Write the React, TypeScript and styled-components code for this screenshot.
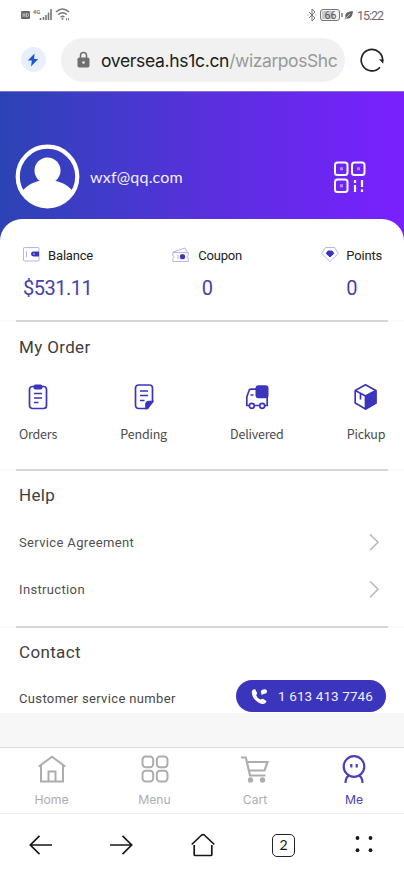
import React from 'react';
import styled, { createGlobalStyle } from 'styled-components';

const BLUE = '#3b35bd';

const Global = createGlobalStyle`
  * { box-sizing: border-box; }
  body { margin: 0; background: #fff; font-family: Roboto, "Noto Sans", sans-serif; }
  svg { display: block; flex: none; overflow: visible; }
`;

const Screen = styled.div`
  width: 404px;
  height: 876px;
  overflow: hidden;
  display: flex;
  flex-direction: column;
  background: #fff;
`;

const StatusBar = styled.div`
  height: 30px;
  padding: 0 21px 0 20px;
  display: flex;
  align-items: center;
  justify-content: space-between;
  color: #6b6b6b;
`;
const StatusGroup = styled.div`
  display: flex;
  align-items: center;
`;
const Clock = styled.span`
  font-size: 12.5px;
  letter-spacing: -1.05px;
  margin-left: 4px;
  width: 26px;
  white-space: nowrap;
`;

const AddressBar = styled.div`
  height: 61px;
  padding: 0 20px 2px 21px;
  display: flex;
  align-items: center;
`;
const Bolt = styled.div`
  width: 25px;
  height: 25px;
  border-radius: 50%;
  background: #e8eefb;
  display: grid;
  place-items: center;
  margin-right: 15px;
`;
const UrlPill = styled.div`
  width: 285px;
  height: 44px;
  border-radius: 22px;
  background: #f1f1f1;
  display: flex;
  align-items: center;
  padding-left: 16px;
  margin-right: 15px;
`;
const UrlText = styled.div`
  margin: 2px 0 0 11px;
  white-space: nowrap;
  font: 17.5px/26px Inter, sans-serif;
  letter-spacing: -0.32px;
  color: #202020;
`;
const UrlPath = styled.span`
  color: #999;
  letter-spacing: -0.42px;
`;

const Hero = styled.header`
  height: 153px;
  flex: none;
  padding: 52px 38px 0 15px;
  background: linear-gradient(90deg, #2c43b4 0%, #433acb 28%, #5830dc 50%, #7a20ff 100%);
  border-top: 1px solid #8173cf;
  display: flex;
  align-items: flex-start;
`;
const UserName = styled.div`
  flex: 1;
  margin: 21px 0 0 10px;
  color: #f1efff;
  font: 16px/24px Lato, sans-serif;
  letter-spacing: 0.2px;
`;
const QrSlot = styled.div`
  margin: 17px 0 0;
`;

const Card = styled.main`
  flex: none;
  height: 494px;
  margin-top: -25px;
  border-radius: 22px 22px 0 0;
  background: #fff;
`;
const Stats = styled.section`
  height: 101px;
  padding: 26px 22px 0 23px;
  display: flex;
  justify-content: space-between;
`;
const Stat = styled.div<{ $center?: boolean; $w: number }>`
  width: ${(p) => p.$w}px;
  text-align: ${(p) => (p.$center ? 'center' : 'left')};
`;
const StatLabel = styled.div`
  display: flex;
  align-items: center;
  justify-content: space-between;
  font-size: 13px;
  line-height: 21px;
  letter-spacing: -0.2px;
  color: #222;
`;
const StatValue = styled.div`
  margin-top: 9px;
  color: #4541ad;
  font-size: 20px;
  line-height: 26px;
  letter-spacing: -0.5px;
  white-space: nowrap;
`;
const Divider = styled.hr`
  height: 2px;
  margin: 0;
  border: 0;
  background: linear-gradient(90deg, #fafafa 16px, #d6d6d6 16px, #d6d6d6 388px, #fafafa 388px);
`;
const Section = styled.section<{ $h: number; $top?: number }>`
  height: ${(p) => p.$h}px;
  padding: ${(p) => p.$top ?? 13}px 19px 0;
`;
const Heading = styled.h2`
  margin: 0;
  font: 400 17px/22px Roboto, sans-serif;
  letter-spacing: 0.35px;
  color: #404040;
`;
const OrderRow = styled.div`
  display: flex;
  justify-content: space-between;
  padding-top: 26px;
`;
const OrderItem = styled.div<{ $w: number }>`
  width: ${(p) => p.$w}px;
  display: flex;
  flex-direction: column;
  align-items: center;
  gap: 15px;
  font: 12.5px/18px "Noto Sans CJK SC", sans-serif;
  letter-spacing: -0.2px;
  color: #4b4b4b;
`;
const LinkRow = styled.div<{ $first?: boolean }>`
  height: 47px;
  margin-top: ${(p) => (p.$first ? '13px' : 0)};
  padding-right: 6px;
  display: flex;
  align-items: center;
  justify-content: space-between;
  font-size: 13px;
  letter-spacing: 0.35px;
  color: #505050;
`;
const ContactRow = styled.div`
  height: 32px;
  margin: 17px -1px 0 0;
  display: flex;
  align-items: center;
  justify-content: space-between;
  font-size: 13px;
  letter-spacing: 0.35px;
  color: #484848;
`;
const ContactLabel = styled.span`
  padding-top: 4px;
`;
const PhoneButton = styled.button`
  width: 150px;
  height: 32px;
  padding: 0 13px 0 15px;
  border: 0;
  border-radius: 16px;
  background: ${BLUE};
  color: #f0efff;
  display: flex;
  align-items: center;
  justify-content: space-between;
  font: 13.5px Roboto, sans-serif;
  letter-spacing: 0.1px;
  white-space: nowrap;
`;
const Gap = styled.div`
  height: 34px;
  background: #f7f7f7;
`;
const TabBar = styled.nav`
  height: 66px;
  border-top: 1px solid #dedede;
  padding: 7px 0 0;
  display: grid;
  grid-template-columns: 103px 103px 98px 100px;
`;
const Tab = styled.div<{ $active?: boolean }>`
  display: flex;
  flex-direction: column;
  align-items: center;
  gap: 8px;
  color: ${(p) => (p.$active ? '#4b40b8' : '#adadad')};
  font: 12.2px/18px Inter, sans-serif;
`;
const BrowserNav = styled.nav`
  height: 63px;
  border-top: 1px solid #efefef;
  display: grid;
  grid-template-columns: repeat(5, 81px);
  margin-right: -1px;
  align-items: center;
  justify-items: center;
  color: #171717;
`;
const TabCount = styled.div`
  width: 23px;
  height: 23px;
  border: 1.7px solid #222;
  border-radius: 5px;
  display: grid;
  place-items: center;
  font: 14px/18px Lato, sans-serif;
`;

const SignalIcons = () => (
  <svg width="51" height="14" viewBox="0 0 51 14" fill="none" stroke="#777">
    <rect x="1" y="3" width="9" height="8" rx="1.2" fill="#666" stroke="none" />
    <path d="M3 5v4M5 5v4M3 7h2M6.500 5.300h1c1.400 0 1.400 3.400 0 3.400h-1z" stroke="#ddd" strokeWidth=".7" />
    <text x="12.800" y="5.500" fontSize="6" fontFamily="Roboto" fontWeight="700" fill="#777" stroke="none">4G</text>
    <path d="M20.500 10v2M23.500 9v3M26 7v5M28.500 4.500v7.500M31 1v11" strokeWidth="1.600" />
    <path d="M36 4q6.500-6 13 0M38.200 6.500q4.300-3.500 8.600 0M40.500 9q2-1.500 4 0" strokeWidth="1.400" />
    <circle cx="42.500" cy="10.800" r="1" fill="#777" stroke="none" />
    <path d="M46.500 10v2.500M48.500 10v2.500" strokeWidth=".9" />
  </svg>
);
const BatteryIcons = () => (
  <svg width="47" height="14" viewBox="0 0 47 14" fill="none" stroke="#777">
    <path d="m3 4 6 6-3 3V1l3 3-6 6M1.500 7h.8M9.500 7h.8" />
    <rect x="14.500" y="1.500" width="19" height="11" rx="2.500" fill="#f4f4f4" />
    <rect x="16" y="3" width="12" height="8" rx="1" fill="#c9c9c9" stroke="none" />
    <text x="18.500" y="10.800" fontSize="10.500" fontFamily="Roboto" fill="#555" stroke="none">66</text>
    <path d="M36 5v4" strokeWidth="1.500" />
    <path d="M47 3c-6 .5-8.500 2.500-7.500 6l-1 2.500 2-1c3.500.5 6-1.500 6.500-7.500Z" fill="#666" stroke="none" />
    <path d="m39.500 10.500 4.500-4.500" stroke="#fff" strokeWidth=".6" />
  </svg>
);
const BoltIcon = () => (
  <svg width="12" height="14" viewBox="0 0 12 14"><path d="M7.500.5.800 7.500h4L4 13.500l7.200-7.500H7.100Z" fill="#1858d6" /></svg>
);
const LockIcon = () => (
  <svg width="13" height="16" viewBox="0 0 13 16">
    <path d="M3.500 7V3.500a3 3 0 0 1 6 0V7" fill="none" stroke="#707070" strokeWidth="1.500" />
    <rect x=".5" y="5.500" width="12" height="10" rx="1.800" fill="#707070" />
    <circle cx="6.500" cy="10.500" r="1.300" fill="#eee" />
  </svg>
);
const ReloadIcon = () => (
  <svg width="24" height="24" viewBox="0 0 24 24" fill="none">
    <path d="M20 19.200a10.700 10.700 0 1 1 2.600-6" stroke="#222" strokeWidth="1.700" />
    <path d="m19 11.200 4.500.3-.3 4.300Z" fill="#222" />
  </svg>
);
const Avatar = () => (
  <svg width="65" height="65" viewBox="0 0 65 65">
    <circle cx="32.500" cy="32.500" r="29.800" fill="none" stroke="#fff" strokeWidth="4.200" />
    <circle cx="32.500" cy="26.500" r="13" fill="#fff" />
    <path d="M7 47.500C11 42 18 38 25.500 36.800h14C47 38 54 42 58 47.500 54 57 44 63 32.500 63S11 57 7 47.500Z" fill="#fff" />
  </svg>
);
const QrIcon = () => (
  <svg width="32" height="33" viewBox="0 0 32 33" fill="none" stroke="#fff" strokeWidth="2">
    <rect x="1" y="1.500" width="12.500" height="12.500" rx="2.500" />
    <rect x="18" y="1.500" width="12.500" height="12.500" rx="2.500" />
    <rect x="1" y="18.500" width="12.500" height="12.500" rx="2.500" />
    <path d="M6 7.700h3M23 7.700h3M6 24.700h3" stroke="#b48aff" strokeWidth="3" />
    <path d="M21 19v3M21 24v7M28 19v7M28 28.500v2.500" strokeWidth="2.200" />
  </svg>
);
const WalletIcon = () => (
  <svg width="17" height="17" viewBox="0 0 17 17" fill="none" stroke="#b9b5df">
    <rect x=".5" y=".5" width="15.500" height="13.500" rx="1" />
    <path d="M3.500 4v6" />
    <path d="M10.500 4.500H16v5h-5.500a2.500 2.500 0 0 1 0-5Z" fill={BLUE} stroke="none" />
    <circle cx="11" cy="7" r=".7" fill="#fff" stroke="none" />
  </svg>
);
const CouponIcon = () => (
  <svg width="17" height="17" viewBox="0 0 17 17" fill="none" stroke="#b9b5df">
    <path d="m1 5 12-4 2 4M.8 5.500h15.400v3c-1.500.5-1.500 2 0 2.500v3.500H.8V11c1.500-.5 1.500-2 0-2.500Z" />
    <path d="M6 8v4" />
    <circle cx="10.500" cy="9.700" r="2.600" fill={BLUE} stroke="none" />
  </svg>
);
const PointsIcon = () => (
  <svg width="18" height="17" viewBox="0 0 18 17" fill="none" stroke="#b9b5df">
    <path d="M4.500.5h9l3.800 6L9 14.500.700 6.500Z" strokeLinejoin="round" />
    <path d="M7 4h4l1.800 2.500L9 10 5.200 6.500Z" fill={BLUE} stroke={BLUE} strokeLinejoin="round" />
  </svg>
);
const OrdersIcon = () => (
  <svg width="20" height="26" viewBox="0 0 20 26" fill="none" stroke={BLUE} strokeWidth="1.700">
    <rect x="1.500" y="2.500" width="17" height="22" rx="3" />
    <rect x="5.500" y=".5" width="9" height="5" rx="2" fill={BLUE} stroke="none" />
    <path d="M6 9.500h8M6 14h8M6 18.500h4.500" />
  </svg>
);
const PendingIcon = () => (
  <svg width="20" height="26" viewBox="0 0 20 26" fill="none" stroke={BLUE} strokeWidth="1.700">
    <path d="M12 24.500H4.500a3 3 0 0 1-3-3V4a3 3 0 0 1 3-3h11a3 3 0 0 1 3 3v14L12 24.500Z" />
    <path d="M18.500 17.500H15a3 3 0 0 0-3 3v4h1.500Z" fill={BLUE} />
    <path d="M6 7h8M6 11.500h8M6 16.500h4.500" />
  </svg>
);
const TruckIcon = () => (
  <svg width="24" height="26" viewBox="0 0 24 26" fill="none" stroke={BLUE} strokeWidth="1.700">
    <path d="M4 21.500H1.800V13L4 6.700a2 2 0 0 1 2-1.500h6M9.500 21.500h5M20 21.500h2.200v-10" />
    <rect x="10.500" y="1.200" width="13" height="13" rx="3" fill={BLUE} stroke="none" />
    <path d="M5.500 11h3" strokeWidth="1.500" />
    <circle cx="6.800" cy="21.800" r="2.500" fill="#fff" />
    <circle cx="17.200" cy="21.800" r="2.500" fill="#fff" />
  </svg>
);
const BoxIcon = () => (
  <svg width="23" height="26" viewBox="0 0 23 26" fill="none" stroke={BLUE} strokeWidth="1.700" strokeLinejoin="round">
    <path d="M11.500.8 21.800 6.500v12.500l-10.300 6L1.200 19V6.500Z" />
    <path d="M21.800 6.500 11.500 12v13l10.300-6Z" fill={BLUE} />
    <path d="m1.200 6.500 10.300 5.500M6.500 10v5.500" />
  </svg>
);
const Chevron = () => (
  <svg width="10" height="18" viewBox="0 0 10 18" fill="none"><path d="m1 .3 8 8-8 8" stroke="#b9b9b9" strokeWidth="1.600" /></svg>
);
const PhoneIcon = () => (
  <svg width="17" height="17" viewBox="0 0 17 17" fill="#fff">
    <path d="M.8 3.500C1.200 1.800 3 1 4.200 1.300L6.200 5.200 5.200 7.300c.7 2 2.100 3.200 4.300 4.300l2.300-.8L15.500 13c-.2 1.900-2 3-4 3C6.500 15.500.3 9.500.8 3.500Z" />
    <path d="M9.800 4C9.800 1.800 12 1.200 13.500 1.200S16 2 16 3.500 14.500 6 12.500 6L10.500 7.200V5.600C10 5.200 9.800 4.700 9.800 4Z" />
  </svg>
);
const HomeIcon = () => (
  <svg width="28" height="28" viewBox="0 0 28 28" fill="none" stroke="currentColor" strokeWidth="2">
    <path d="M.8 11.500 14 1.800l13.200 9.700M3 10v16.500h22V10" />
    <path d="M10.500 26.500v-10h7v10" />
  </svg>
);
const MenuIcon = () => (
  <svg width="28" height="28" viewBox="0 0 28 28" fill="none" stroke="currentColor" strokeWidth="2">
    {[1.5, 15.8].map((x) => [1.5, 15.8].map((y) => <rect key={`${x}-${y}`} x={x} y={y} width="10.700" height="10.700" rx="3.200" />))}
  </svg>
);
const CartIcon = () => (
  <svg width="30" height="28" viewBox="0 0 30 28" fill="none" stroke="currentColor" strokeWidth="2.200">
    <path d="M1 2.500h4.800L10 20.500h15.500M7 7h20.500l-3 8.500H9.500" />
    <circle cx="10.500" cy="25" r="2.700" fill="currentColor" stroke="none" />
    <circle cx="22.500" cy="25" r="2.700" fill="currentColor" stroke="none" />
  </svg>
);
const MeIcon = () => (
  <svg width="24" height="28" viewBox="0 0 24 28" fill="none" stroke="currentColor" strokeWidth="2.200">
    <circle cx="12" cy="11.500" r="10.300" />
    <path d="M7 20.500c-2.500 1.500-3.500 3.500-3.500 7.500M17 20.500c2.500 1.500 3.500 3.500 3.500 7.500M9.300 9v3.500M14.700 9v3.500" />
  </svg>
);
const Arrow = ({ right }: { right?: boolean }) => (
  <svg width="23" height="20" viewBox="0 0 23 20" fill="none" stroke="currentColor" strokeWidth="1.700">
    {right ? <path d="M0 10h21.500M12.500.8 21.700 10l-9.200 9.200" /> : <path d="M23 10H1.500M10.500.8 1.300 10l9.200 9.200" />}
  </svg>
);
const BrowserHome = () => (
  <svg width="24" height="24" viewBox="0 0 24 24" fill="none" stroke="currentColor" strokeWidth="1.700" strokeLinejoin="round">
    <path d="m.7 11.500 10-9.500q1.300-1 2.600 0l10 9.500M3.200 12v9.500q0 1 1 1h15.600q1 0 1-1V12" />
  </svg>
);
const Dots = () => (
  <svg width="19" height="18" viewBox="0 0 19 18" fill="currentColor">
    {[2.5, 15.5].map((x) => [2, 14.2].map((y) => <circle key={`${x}-${y}`} cx={x} cy={y} r="1.900" />))}
  </svg>
);

export default function App() {
  return (
    <>
      <Global />
      <Screen>
        <StatusBar>
          <SignalIcons />
          <StatusGroup><BatteryIcons /><Clock>15:22</Clock></StatusGroup>
        </StatusBar>
        <AddressBar>
          <Bolt><BoltIcon /></Bolt>
          <UrlPill><LockIcon /><UrlText>oversea.hs1c.cn<UrlPath>/wizarposShc</UrlPath></UrlText></UrlPill>
          <ReloadIcon />
        </AddressBar>
        <Hero>
          <Avatar />
          <UserName>wxf@qq.com</UserName>
          <QrSlot><QrIcon /></QrSlot>
        </Hero>
        <Card>
          <Stats>
            <Stat $w={70}><StatLabel><WalletIcon />Balance</StatLabel><StatValue>$531.11</StatValue></Stat>
            <Stat $w={70} $center><StatLabel><CouponIcon />Coupon</StatLabel><StatValue>0</StatValue></Stat>
            <Stat $w={61} $center><StatLabel><PointsIcon />Points</StatLabel><StatValue>0</StatValue></Stat>
          </Stats>
          <Divider />
          <Section $h={147} $top={14}>
            <Heading>My Order</Heading>
            <OrderRow>
              <OrderItem $w={38}><OrdersIcon />Orders</OrderItem>
              <OrderItem $w={46}><PendingIcon />Pending</OrderItem>
              <OrderItem $w={53}><TruckIcon />Delivered</OrderItem>
              <OrderItem $w={38}><BoxIcon />Pickup</OrderItem>
            </OrderRow>
          </Section>
          <Divider />
          <Section $h={155}>
            <Heading>Help</Heading>
            <LinkRow $first>Service Agreement<Chevron /></LinkRow>
            <LinkRow>Instruction<Chevron /></LinkRow>
          </Section>
          <Divider />
          <Section $h={85}>
            <Heading>Contact</Heading>
            <ContactRow>
              <ContactLabel>Customer service number</ContactLabel>
              <PhoneButton><PhoneIcon />1 613 413 7746</PhoneButton>
            </ContactRow>
          </Section>
        </Card>
        <Gap />
        <TabBar>
          <Tab><HomeIcon />Home</Tab>
          <Tab><MenuIcon />Menu</Tab>
          <Tab><CartIcon />Cart</Tab>
          <Tab $active><MeIcon />Me</Tab>
        </TabBar>
        <BrowserNav>
          <Arrow />
          <Arrow right />
          <BrowserHome />
          <TabCount>2</TabCount>
          <Dots />
        </BrowserNav>
      </Screen>
    </>
  );
}
